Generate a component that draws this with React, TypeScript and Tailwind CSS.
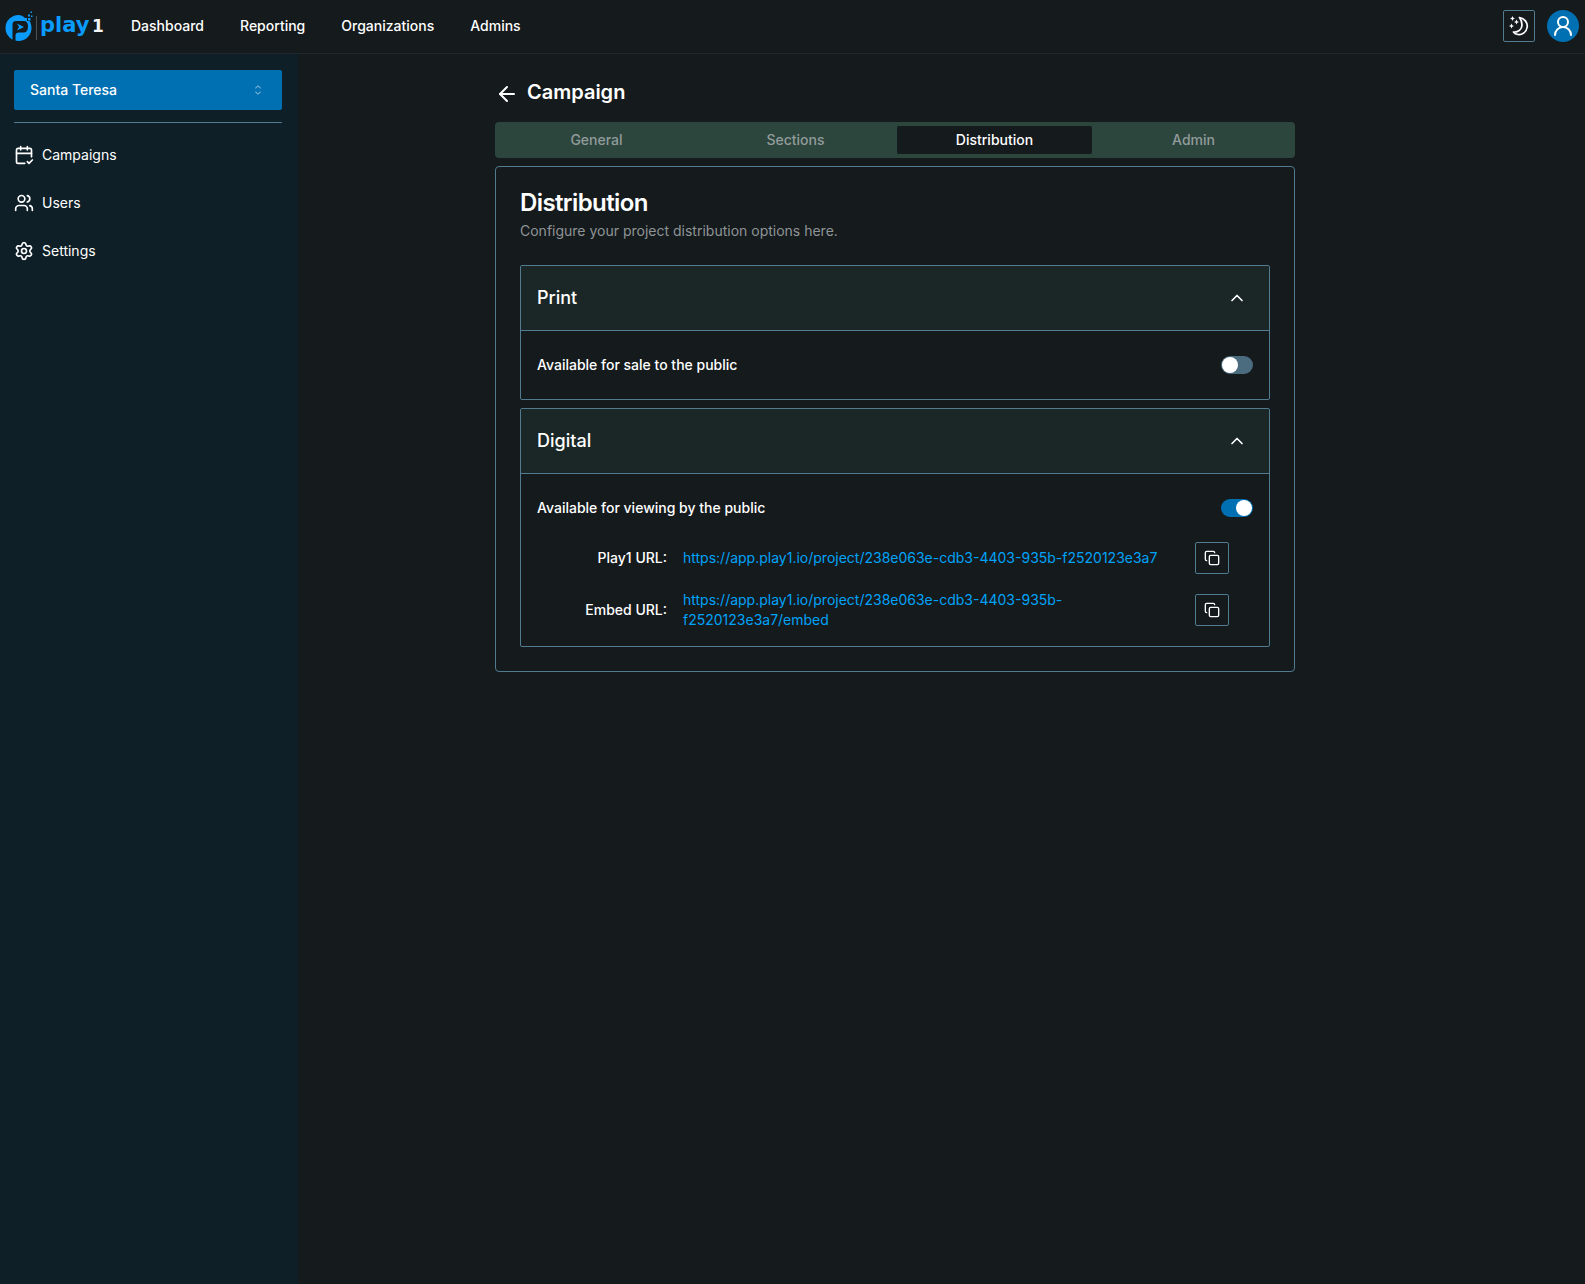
import { useState } from "react";
import type { LucideIcon } from "lucide-react";
import { ArrowLeft, CalendarCheck2, ChevronUp, Copy, Settings, UserRound, Users } from "lucide-react";
import { RxCaretSort } from "react-icons/rx";

const topLinks = ["Dashboard", "Reporting", "Organizations", "Admins"];
const tabs = ["General", "Sections", "Distribution", "Admin"];
const projectUrl = "https://app.play1.io/project/238e063e-cdb3-4403-935b-f2520123e3a7";

const sideLinks: { label: string; icon: LucideIcon }[] = [
  { label: "Campaigns", icon: CalendarCheck2 },
  { label: "Users", icon: Users },
  { label: "Settings", icon: Settings },
];

function Logo() {
  return (
    <svg width="100" height="32" viewBox="0 0 100 32" role="img" aria-label="play1">
      {/* Disc with the notch, then the dark bowl and stem */}
      <path
        d="M14.5 5a13 13 0 1 0 13 13c0-2.500-.7-5-2-7h-2.500v-3h-2c-2-2-4-3-6.500-3z"
        fill="#0a9bfb"
      />
      <path
        d="M8.500 32V14.500q0-3.500 3.500-3.500h8q4 0 4 5.500t-4 6h-5q-3.500 0-3.500 3V32z"
        fill="#151a1d"
      />
      <g fill="#0a9bfb">
        <path d="M13 13.500l7 3.500-7 3.500 2-3.500z" />
        <rect x="24" y="8" width="2.500" height="2.500" />
        <rect x="24" y="4.500" width="2" height="2" />
        <rect x="27" y="5.500" width="1.500" height="1.500" />
        <rect x="26.500" y="1.500" width="1.500" height="1.500" />
      </g>
      <path d="M32.500 6v24" stroke="#4b5055" />
      <text x="36" y="22" fill="#0a9bfb" fontSize="21" fontWeight="700" fontFamily="DejaVu Sans, sans-serif">
        play
      </text>
      <text x="88" y="22" fill="#f5f5f5" fontSize="17" fontWeight="700" fontFamily="DejaVu Sans, sans-serif">
        1
      </text>
    </svg>
  );
}

function MoonStars() {
  return (
    <svg width="20" height="20" viewBox="0 0 20 20" fill="currentColor">
      <path
        d="M10.500 1.500C16 2.500 18.700 7 18.200 11c-.7 5-5 8-9.200 7.500-2-.3-3.500-1-4.500-2.500 4.500.5 8.500-2.500 8.500-7 0-3-1-5.500-2.500-7.500z"
        fill="none"
        stroke="currentColor"
        strokeWidth="1.7"
        strokeLinejoin="round"
      />
      <path d="M3.500 0l.8 1.700 1.700.8-1.700.8-.8 1.700-.8-1.700L1 2.500l1.700-.8z" />
      <path d="M7.500 3.500l.8 1.700 1.700.8-1.700.8-.8 1.700-.8-1.700L5 6l1.700-.8z" />
      <path d="M2.500 7.500l.8 1.700 1.700.8-1.700.8-.8 1.700-.8-1.700L0 10l1.700-.8z" />
    </svg>
  );
}

function Toggle({ id, defaultChecked }: { id: string; defaultChecked?: boolean }) {
  return (
    <span className="grid h-[18px] w-8 items-center">
      <input
        id={id}
        type="checkbox"
        role="switch"
        defaultChecked={defaultChecked}
        className="peer col-start-1 row-start-1 h-[18px] w-8 cursor-pointer appearance-none rounded-full bg-[#4b6b7e] checked:bg-[#0070b2]"
      />
      <span className="pointer-events-none col-start-1 row-start-1 ml-px size-4 rounded-full bg-white peer-checked:ml-[15px]" />
    </span>
  );
}

function Panel({ title, children }: { title: string; children: React.ReactNode }) {
  const [open, setOpen] = useState(true);

  return (
    <section className="overflow-hidden rounded-xs border border-[#507b91]">
      <h3>
        <button
          type="button"
          aria-expanded={open}
          onClick={() => setOpen(!open)}
          className="flex h-16 w-full items-center justify-between bg-[#1b2727] pr-[22px] pl-4 text-lg font-medium"
        >
          {title}
          <ChevronUp size={20} className={open ? "" : "rotate-180"} />
        </button>
      </h3>
      {open && <div className="flex flex-col gap-4 border-t border-[#507b91] p-4">{children}</div>}
    </section>
  );
}

function ToggleRow({ id, label, defaultChecked }: { id: string; label: string; defaultChecked?: boolean }) {
  return (
    <div className="flex h-9 items-center justify-between">
      <label htmlFor={id} className="font-medium">
        {label}
      </label>
      <Toggle id={id} defaultChecked={defaultChecked} />
    </div>
  );
}

function UrlRow({ label, url }: { label: string; url: string }) {
  return (
    <div className="grid grid-cols-[130px_1fr_auto] items-center gap-4 pr-6">
      <span className="text-right font-medium">{label}</span>
      <a href={url} className="text-[#00a3f8]">
        {url}
      </a>
      <button
        type="button"
        aria-label={`Copy ${label}`}
        className="flex h-8 w-[34px] items-center justify-center rounded-xs border border-[#507b91]"
      >
        <Copy size={16} />
      </button>
    </div>
  );
}

export default function App() {
  return (
    <div className="flex min-h-screen flex-col bg-[#151a1d] font-[Inter,sans-serif] text-sm text-white">
      <header className="flex items-center border-b border-[#20272c] pt-[10px] pr-[6px] pb-[11px] pl-1">
        <a href="#" className="mr-[27px]">
          <Logo />
        </a>
        <nav className="flex flex-1 gap-9 font-medium">
          {topLinks.map((link) => (
            <a key={link} href="#">
              {link}
            </a>
          ))}
        </nav>
        <div className="flex gap-3">
          <button
            type="button"
            aria-label="Toggle theme"
            className="flex size-8 items-center justify-center rounded-xs border border-[#507b91]"
          >
            <MoonStars />
          </button>
          <button
            type="button"
            aria-label="Account"
            className="flex size-8 items-center justify-center rounded-full bg-[#0070b2]"
          >
            <UserRound size={24} />
          </button>
        </div>
      </header>

      <div className="flex flex-1">
        <aside className="w-[298px] shrink-0 bg-[#0e1f27] pt-4 pr-4 pl-[14px]">
          <button
            type="button"
            className="flex h-10 w-full items-center justify-between rounded-xs bg-[#0070b2] px-4 font-medium"
          >
            Santa Teresa
            <RxCaretSort size={16} className="opacity-50" />
          </button>
          <hr className="mt-3 border-[#507b91]" />
          <nav className="mt-2 flex flex-col">
            {sideLinks.map(({ label, icon: Icon }) => (
              <a key={label} href="#" className="flex h-12 items-center gap-2">
                <Icon size={20} />
                {label}
              </a>
            ))}
          </nav>
        </aside>

        <main className="max-w-[1194px] flex-1 px-4 pt-6">
          <div className="mx-auto max-w-[800px]">
            <div className="mb-4 flex h-7 items-center gap-2">
              <a href="#" aria-label="Back" className="pt-1">
                <ArrowLeft size={24} />
              </a>
              <h1 className="text-xl font-semibold">Campaign</h1>
            </div>

            <div role="tablist" className="mb-2 grid grid-cols-4 gap-1 rounded-sm bg-[#2c463d] p-1">
              {tabs.map((tab) => (
                <button
                  key={tab}
                  type="button"
                  role="tab"
                  aria-selected={tab === "Distribution"}
                  className="h-7 rounded-xs font-medium text-[#929b9b] aria-selected:bg-[#151a1d] aria-selected:text-white"
                >
                  {tab}
                </button>
              ))}
            </div>

            <div className="rounded-sm border border-[#507b91] p-6">
              <h2 className="text-2xl leading-6 font-semibold tracking-tight">Distribution</h2>
              <p className="mt-[6px] mb-6 text-[#8f9496]">Configure your project distribution options here.</p>
              <div className="flex flex-col gap-2">
                <Panel title="Print">
                  <ToggleRow id="print-public" label="Available for sale to the public" />
                </Panel>
                <Panel title="Digital">
                  <ToggleRow id="digital-public" label="Available for viewing by the public" defaultChecked />
                  <UrlRow label="Play1 URL:" url={projectUrl} />
                  <UrlRow label="Embed URL:" url={`${projectUrl}/embed`} />
                </Panel>
              </div>
            </div>
          </div>
        </main>
      </div>
    </div>
  );
}
